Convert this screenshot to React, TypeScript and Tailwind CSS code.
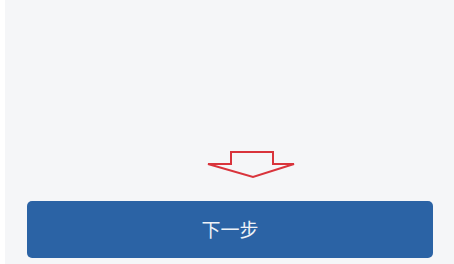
import * as React from "react";

function DownArrow() {
  return (
    <svg width="92" height="30" viewBox="0 0 92 30" fill="none">
      <path
        d="M2 14 L25 14 L25 2 L67 2 L67 14 L88 14 L47 27 Z"
        stroke="#d9343c"
        strokeWidth="2"
        strokeLinejoin="miter"
        fill="none"
      />
    </svg>
  );
}

export default function App() {
  return (
    <div className="flex h-[264px] w-[454px] bg-white">
      <div className="w-[5px] bg-white" />
      <div className="flex flex-1 flex-col bg-[#f5f6f8]">
        <div className="flex-1" />
        <div className="flex pl-[201px]">
          <DownArrow />
        </div>
        <div className="h-[21px]" />
        <div className="pl-[22px] pr-[21px] pb-[6px]">
          <button className="flex h-[57px] w-full items-center justify-center rounded-[5px] bg-[#2b63a5] text-[19px] text-[#eef2f7] font-['Noto_Sans_CJK_SC',sans-serif]">
            下一步
          </button>
        </div>
      </div>
    </div>
  );
}
